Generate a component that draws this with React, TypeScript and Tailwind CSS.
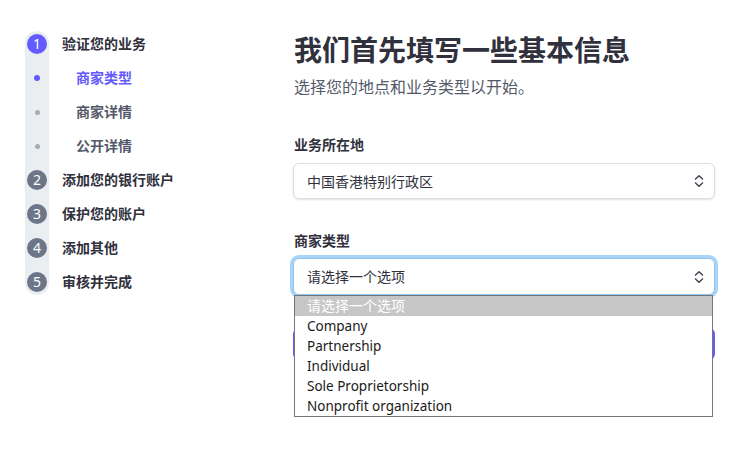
import React from "react";

const font = { fontFamily: '"Noto Sans", "Noto Sans CJK SC", sans-serif' };

function Chevrons() {
  return (
    <svg width="12" height="14" viewBox="0 0 12 14" fill="none" stroke="#414552" strokeWidth="1.5" strokeLinecap="round" strokeLinejoin="round">
      <path d="M2.5 5 L6 1.8 L9.5 5" />
      <path d="M2.5 9 L6 12.2 L9.5 9" />
    </svg>
  );
}

type Item = { kind: "step"; n: number; label: string; active?: boolean } | { kind: "sub"; label: string; active?: boolean };

const items: Item[] = [
  { kind: "step", n: 1, label: "验证您的业务", active: true },
  { kind: "sub", label: "商家类型", active: true },
  { kind: "sub", label: "商家详情" },
  { kind: "sub", label: "公开详情" },
  { kind: "step", n: 2, label: "添加您的银行账户" },
  { kind: "step", n: 3, label: "保护您的账户" },
  { kind: "step", n: 4, label: "添加其他" },
  { kind: "step", n: 5, label: "审核并完成" },
];

export default function App() {
  return (
    <div className="w-[751px] h-[473px] bg-white flex overflow-hidden" style={font}>
      {/* Sidebar */}
      <div className="pl-[25px] pt-[31px] flex w-[293px] shrink-0">
        <div className="w-[24px] bg-[#ebeef1] rounded-full py-[3px] flex flex-col items-center gap-[14px] self-start">
          {items.map((it, i) => (
            <div key={i} className="h-[20px] w-[20px] flex items-center justify-center">
              {it.kind === "step" ? (
                <div
                  className={
                    "w-[20px] h-[20px] rounded-full flex items-center justify-center text-white text-[14px] leading-none " +
                    (it.active ? "bg-[#635bff]" : "bg-[#6c7688]")
                  }
                >
                  {it.n}
                </div>
              ) : (
                <div className={"rounded-full " + (it.active ? "w-[6px] h-[6px] bg-[#635bff]" : "w-[5px] h-[5px] bg-[#a3acb9]")} />
              )}
            </div>
          ))}
        </div>
        <div className="ml-[13px] pt-[2px] flex flex-col gap-[14px]">
          {items.map((it, i) => (
            <div
              key={i}
              className={
                "h-[20px] flex items-center text-[14px] font-semibold whitespace-nowrap " +
                (it.kind === "sub" ? "pl-[14px] " : "") +
                (it.active && it.kind === "sub"
                  ? "text-[#635bff]"
                  : it.kind === "sub"
                  ? "text-[#545969]"
                  : "text-[#30313d]")
              }
            >
              {it.label}
            </div>
          ))}
        </div>
      </div>

      {/* Main */}
      <div className="w-[422px] pt-[32px] flex flex-col">
        <h1 className="text-[28px] leading-[36px] font-bold text-[#30313d] pl-[1px]">我们首先填写一些基本信息</h1>
        <p className="mt-[8px] text-[16px] leading-[22px] text-[#545969] pl-[1px]">选择您的地点和业务类型以开始。</p>

        <div className="mt-[37px] text-[14px] leading-[20px] font-semibold text-[#30313d] pl-[1px]">业务所在地</div>
        <div className="mt-[8px] h-[36px] rounded-[6px] border border-[#dcdee3] shadow-[0_1px_2px_rgba(0,0,0,0.12)] flex items-center justify-between pl-[13px] pr-[9px] text-[14px] text-[#30313d]">
          <span>中国香港特别行政区</span>
          <Chevrons />
        </div>

        <div className="mt-[32px] text-[14px] leading-[20px] font-semibold text-[#30313d] pl-[1px]">商家类型</div>
        <div className="relative mt-[7px]">
          <div className="h-[37px] rounded-[6px] border border-[#8fc4ee] ring-[3px] ring-[#a8d4f7] flex items-center justify-between pl-[13px] pr-[9px] text-[14px] text-[#30313d] bg-white">
            <span>请选择一个选项</span>
            <Chevrons />
          </div>

          <div className="mt-[33px] h-[32px] rounded-[6px] bg-[#635bff]" />

          <div className="absolute left-[1px] right-[2px] top-[37px] bg-white border border-[#767676] text-[13.5px] text-[#1a1a1a]">
            <div className="h-[20px] leading-[20px] pl-[12px] bg-[#c6c6c6] text-white text-[14px]">请选择一个选项</div>
            <div className="h-[20px] leading-[20px] pl-[12px]">Company</div>
            <div className="h-[20px] leading-[20px] pl-[12px]">Partnership</div>
            <div className="h-[20px] leading-[20px] pl-[12px]">Individual</div>
            <div className="h-[20px] leading-[20px] pl-[12px]">Sole Proprietorship</div>
            <div className="h-[20px] leading-[20px] pl-[12px]">Nonprofit organization</div>
          </div>
        </div>
      </div>
    </div>
  );
}
